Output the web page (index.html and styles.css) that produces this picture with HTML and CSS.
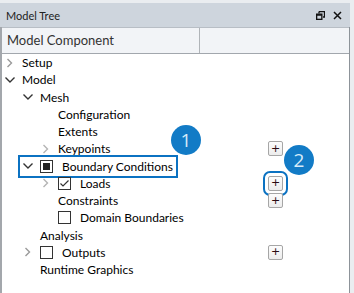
FILE: index.html
```html
<!DOCTYPE html>
<html lang="en">
<head>
    <meta charset="UTF-8">
    <meta name="viewport" content="width=device-width, initial-scale=1.0">
    <title>Model Tree</title>
    <link rel="stylesheet" href="styles.css">
</head>
<body>

    <div class="panel">
        <div class="titlebar">
            <span class="title">Model Tree</span>
            <span class="tools">
                <svg class="tool" width="9" height="9" viewBox="0 0 9 9">
                    <path d="M3 0.5h5.5v5.5h-1.5M3 0.5v2" fill="none" stroke="#111" stroke-width="1.3"/>
                    <rect x="0.65" y="3.15" width="5.2" height="5.2" fill="none" stroke="#111" stroke-width="1.3"/>
                    <rect x="0.65" y="3.15" width="5.2" height="1.6" fill="#111"/>
                </svg>
                <svg class="tool" width="9" height="9" viewBox="0 0 9 9">
                    <path d="M1 1L8 8M8 1L1 8" stroke="#111" stroke-width="1.5"/>
                </svg>
            </span>
        </div>

        <div class="content">
            <div class="header">
                <div class="col-name">Model Component</div>
                <div class="col-extra"></div>
            </div>

            <div class="tree">
                <div class="row">
                    <div class="node lvl0"><span class="twisty closed"><svg width="12" height="12" viewBox="0 0 12 12"><polyline points="3.5,2 7.5,6 3.5,10"/></svg></span><span class="label">Setup</span></div>
                    <div class="act"></div>
                </div>
                <div class="row">
                    <div class="node lvl0"><span class="twisty open"><svg width="12" height="12" viewBox="0 0 12 12"><polyline points="1.5,3.5 6,8 10.5,3.5"/></svg></span><span class="label">Model</span></div>
                    <div class="act"></div>
                </div>
                <div class="row">
                    <div class="node lvl1"><span class="twisty open"><svg width="12" height="12" viewBox="0 0 12 12"><polyline points="1.5,3.5 6,8 10.5,3.5"/></svg></span><span class="label">Mesh</span></div>
                    <div class="act"></div>
                </div>
                <div class="row">
                    <div class="node lvl2"><span class="twisty"></span><span class="label">Configuration</span></div>
                    <div class="act"></div>
                </div>
                <div class="row">
                    <div class="node lvl2"><span class="twisty"></span><span class="label">Extents</span></div>
                    <div class="act"></div>
                </div>
                <div class="row">
                    <div class="node lvl2"><span class="twisty closed light"><svg width="12" height="12" viewBox="0 0 12 12"><polyline points="3.5,2 7.5,6 3.5,10"/></svg></span><span class="label">Keypoints</span></div>
                    <div class="act"><button class="add">+</button></div>
                </div>
                <div class="row">
                    <div class="node lvl1">
                        <span class="focus">
                            <span class="twisty open"><svg width="12" height="12" viewBox="0 0 12 12"><polyline points="1.5,3.5 6,8 10.5,3.5"/></svg></span><span class="check partial"></span><span class="label">Boundary Conditions</span>
                        </span>
                    </div>
                    <div class="act"></div>
                </div>
                <div class="row">
                    <div class="node lvl2"><span class="twisty closed light"><svg width="12" height="12" viewBox="0 0 12 12"><polyline points="3.5,2 7.5,6 3.5,10"/></svg></span><span class="check"><svg width="11" height="11" viewBox="0 0 11 11"><polyline points="1.5,5.5 4,8 9.5,2.5"/></svg></span><span class="label">Loads</span></div>
                    <div class="act"><button class="add focus-btn">+</button></div>
                </div>
                <div class="row">
                    <div class="node lvl2"><span class="twisty"></span><span class="label">Constraints</span></div>
                    <div class="act"><button class="add">+</button></div>
                </div>
                <div class="row">
                    <div class="node lvl3"><span class="check"></span><span class="label">Domain Boundaries</span></div>
                    <div class="act"></div>
                </div>
                <div class="row">
                    <div class="node lvl1"><span class="twisty"></span><span class="label">Analysis</span></div>
                    <div class="act"></div>
                </div>
                <div class="row">
                    <div class="node lvl1"><span class="twisty closed"><svg width="12" height="12" viewBox="0 0 12 12"><polyline points="3.5,2 7.5,6 3.5,10"/></svg></span><span class="check"></span><span class="label">Outputs</span></div>
                    <div class="act"><button class="add">+</button></div>
                </div>
                <div class="row">
                    <div class="node lvl1"><span class="twisty"></span><span class="label">Runtime Graphics</span></div>
                    <div class="act"></div>
                </div>
            </div>
        </div>

        <span class="badge badge-1">1</span>
        <span class="badge badge-2">2</span>
    </div>

</body>
</html>
```

FILE: styles.css
```css
body {
    margin: 0;
    padding: 3px 0 0 0;
    background-color: #eaedf0;
    font-family: Lato, "Noto Sans", sans-serif;
    height: 290px;
    overflow: hidden;
}
.panel {
    position: relative;
    width: 350px;
}
.titlebar {
    height: 24px;
    background: #ced5dd;
    display: flex;
    align-items: center;
    justify-content: space-between;
    padding: 0 8px 0 6px;
}
.title {
    font-size: 11px;
    color: #222;
}
.tools {
    display: flex;
    gap: 8px;
    align-items: center;
}
.content {
    background: #fff;
    border-left: 2px solid #a3a7ac;
    border-right: 1px solid #8d9399;
    height: 270px;
}
.header {
    display: grid;
    grid-template-columns: 198px 1fr;
    height: 25px;
    background: #f2f4f7;
    border-top: 1px solid #b8bec5;
    border-bottom: 1px solid #a2a7ad;
}
.col-name {
    font-size: 13px;
    color: #333;
    padding-left: 5px;
    line-height: 25px;
    border-right: 1px solid #b0b4b8;
}
.tree {
    display: flex;
    flex-direction: column;
}
.row {
    display: grid;
    grid-template-columns: 198px 1fr;
    height: 17.25px;
    align-items: center;
}
.node {
    display: flex;
    align-items: center;
    font-size: 12px;
    color: #000;
    white-space: nowrap;
}
.lvl0 { padding-left: 2px; }
.lvl1 { padding-left: 20px; }
.lvl2 { padding-left: 38px; }
.lvl3 { padding-left: 56px; }
.focus {
    display: flex;
    align-items: center;
    outline: 2px solid #0b72c2;
    outline-offset: 2px;
    padding-right: 1px;
}
.twisty {
    width: 18px;
    height: 12px;
    flex: none;
}
.twisty svg {
    display: block;
    fill: none;
    stroke-width: 1.4;
}
.twisty.open svg { stroke: #333; }
.twisty.closed svg { stroke: #9a9a9a; }
.twisty.light svg { stroke: #b4b4b4; }
.check {
    width: 11px;
    height: 11px;
    border: 1px solid #333;
    margin-right: 9px;
    flex: none;
    display: flex;
    align-items: center;
    justify-content: center;
    background: #fff;
}
.check svg {
    display: block;
    fill: none;
    stroke: #333;
    stroke-width: 1.2;
}
.check.partial::after {
    content: "";
    width: 7px;
    height: 7px;
    background: #222;
}
.act {
    display: flex;
    justify-content: center;
    padding-left: 2px;
}
.add {
    width: 15px;
    height: 15px;
    padding: 0;
    border: 1px solid #a6a6a6;
    border-radius: 2px;
    background: linear-gradient(#fdfdfd, #ececec);
    font-family: "DejaVu Sans", sans-serif;
    font-size: 11px;
    line-height: 12px;
    color: #2a0a12;
}
.focus-btn {
    outline: 2px solid #0b72c2;
    outline-offset: 3px;
}
.badge {
    position: absolute;
    width: 30px;
    height: 30px;
    border-radius: 50%;
    background: #127bc6;
    color: #d6ebf9;
    font-family: "Open Sans", sans-serif;
    font-size: 19px;
    line-height: 30px;
    text-align: center;
}
.badge-1 { left: 171px; top: 122px; }
.badge-2 { left: 284px; top: 142px; }
```
